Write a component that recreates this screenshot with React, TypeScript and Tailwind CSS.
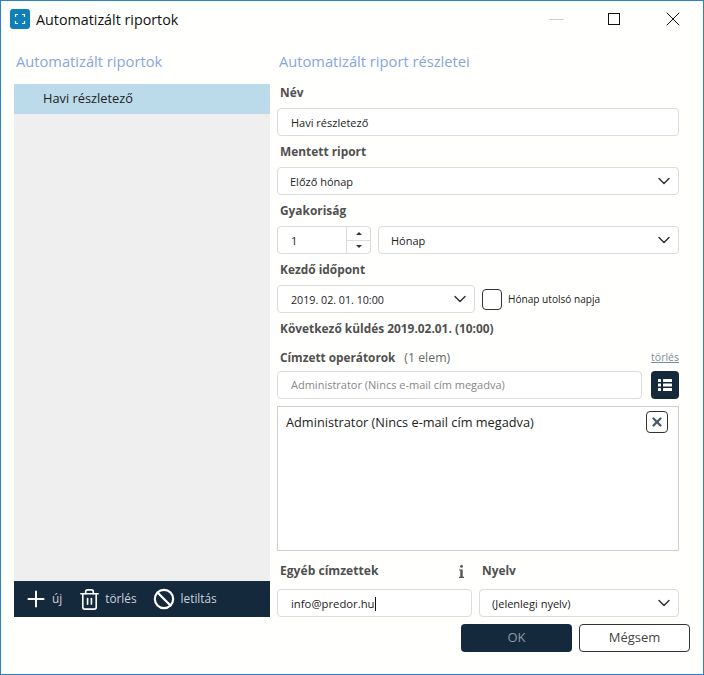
import React from 'react';
import { ChevronDown, Plus, Trash2, Ban, X } from 'lucide-react';

const fieldClass = 'h-[28px] bg-white border border-[#dcdcdc] rounded-[4px] flex items-center text-[11px] text-[#222]';

const Label: React.FC<{ children: React.ReactNode; className?: string }> = ({ children, className }) => (
  <div className={`h-[18px] flex items-center pl-[3px] text-[11.9px] font-bold text-[#505050] ${className ?? ''}`}>{children}</div>
);

const Select: React.FC<{ value: string; className?: string }> = ({ value, className }) => (
  <div className={`${fieldClass} justify-between pl-[12px] pr-[4px] ${className ?? ''}`}>
    <span className="pt-[2px]">{value}</span>
    <ChevronDown className="w-[20px] h-[20px] text-[#333]" strokeWidth={1.8} />
  </div>
);

export default function App() {
  return (
    <div className="w-[704px] h-[675px] bg-[#fffffd] border border-[#2b82c4] flex flex-col overflow-hidden font-['Open_Sans',sans-serif]">
      {/* title bar */}
      <div className="h-[38px] shrink-0 flex items-center pb-[2px] pl-[9px] pr-[18px]">
        <div className="w-[20px] h-[20px] rounded-[3px] bg-[#0f7fb8] flex items-center justify-center">
          <svg viewBox="0 0 14 14" className="w-[14px] h-[14px]" fill="none" stroke="white" strokeWidth="1.2">
            <path d="M2.5 5V2.5H5M9 2.5h2.5V5M11.5 9v2.5H9M5 11.5H2.5V9" />
          </svg>
        </div>
        <span className="ml-[6px] pt-[2px] text-[14.3px] text-[#111]">Automatizált riportok</span>
        <div className="ml-auto flex items-center">
          <div className="w-[15px] h-px bg-[#cfcfcf]" />
          <div className="ml-[44px] w-[12px] h-[12px] border border-[#111]" />
          <X className="ml-[41px] w-[24px] h-[24px] text-[#111]" strokeWidth={1} />
        </div>
      </div>

      <div className="flex-1 flex pl-[13px] min-h-0">
        {/* left column */}
        <div className="w-[256px] shrink-0 flex flex-col">
          <div className="h-[45px] pt-[13px] pl-[2px] text-[14.7px] leading-[19px] text-[#86a6de]">Automatizált riportok</div>
          <div className="h-[497px] bg-[#efefef]">
            <div className="h-[30px] bg-[#bcdbea] flex items-center pl-[29px] text-[12.8px] text-[#222]">Havi részletező</div>
          </div>
          <div className="h-[36px] bg-[#15293d] flex items-center pl-[9px] text-[11.8px] text-[#c8d2db]">
            <Plus className="w-[26px] h-[26px] text-white" strokeWidth={1.8} />
            <span className="ml-[3px]">új</span>
            <Trash2 className="ml-[16px] w-[23px] h-[23px] text-white" strokeWidth={1.7} />
            <span className="ml-[4px]">törlés</span>
            <Ban className="ml-[16px] w-[22px] h-[22px] text-white" strokeWidth={2.4} />
            <span className="ml-[6px]">letiltás</span>
          </div>
        </div>

        {/* right column */}
        <div className="w-[402px] ml-[7px] shrink-0 flex flex-col">
          <div className="h-[45px] pt-[13px] pl-[2px] text-[14.7px] leading-[19px] text-[#86a6de]">Automatizált riport részletei</div>
          <Label>Név</Label>
          <div className={`${fieldClass} pl-[13px] pt-[2px] mt-[6px]`}>Havi részletező</div>
          <Label className="mt-[7px]">Mentett riport</Label>
          <Select value="Előző hónap" className="mt-[6px]" />
          <Label className="mt-[7px]">Gyakoriság</Label>
          <div className="flex gap-[7px] mt-[6px]">
            <div className={`${fieldClass} w-[94px] pl-[13px] justify-between`}>
              <span className="pt-[2px]">1</span>
              <div className="w-[24px] h-full border-l border-[#dcdcdc] flex flex-col">
                <div className="flex-1 flex items-center justify-center border-b border-[#dcdcdc]">
                  <div className="w-0 h-0 border-x-[3px] border-x-transparent border-b-[3px] border-b-[#333]" />
                </div>
                <div className="flex-1 flex items-center justify-center">
                  <div className="w-0 h-0 border-x-[3px] border-x-transparent border-t-[3px] border-t-[#333]" />
                </div>
              </div>
            </div>
            <Select value="Hónap" className="flex-1" />
          </div>
          <Label className="mt-[7px]">Kezdő időpont</Label>
          <div className="flex items-center mt-[6px]">
            <Select value="2019. 02. 01. 10:00" className="w-[198px] !pl-[13px] !text-[10.7px]" />
            <div className="ml-[7px] w-[20px] h-[21px] border border-[#333] rounded-[4px] bg-white" />
            <span className="ml-[6px] pt-[2px] text-[10.1px] text-[#222]">Hónap utolsó napja</span>
          </div>
          <Label className="mt-[7px]">Következő küldés 2019.02.01. (10:00)</Label>
          <div className="h-[18px] mt-[11px] flex items-center justify-between">
            <div className="pl-[3px] text-[11.8px] text-[#505050]">
              <span className="font-bold">Címzett operátorok</span>
              <span className="ml-[9px] text-[12.3px] text-[#666]">(1 elem)</span>
            </div>
            <span className="text-[10.5px] text-[#7d8a96] underline">törlés</span>
          </div>
          <div className="flex gap-[9px] mt-[4px]">
            <div className={`${fieldClass} flex-1 pl-[13px] !text-[#888]`}>Administrator (Nincs e-mail cím megadva)</div>
            <div className="w-[28px] h-[28px] rounded-[4px] bg-[#15293d] flex items-center justify-center">
              <svg viewBox="0 0 14 12" className="w-[14px] h-[12px]" fill="white">
                <rect x="0" y="0" width="3" height="3" rx="0.5" />
                <rect x="5" y="0" width="9" height="3" rx="0.5" />
                <rect x="0" y="4.5" width="3" height="3" rx="0.5" />
                <rect x="5" y="4.5" width="9" height="3" rx="0.5" />
                <rect x="0" y="9" width="3" height="3" rx="0.5" />
                <rect x="5" y="9" width="9" height="3" rx="0.5" />
              </svg>
            </div>
          </div>
          <div className="h-[145px] mt-[7px] bg-white border border-[#cfcfcf] flex items-start justify-between pl-[8px] pr-[10px] pt-[4px]">
            <span className="text-[12.75px] leading-[22px] text-[#222]">Administrator (Nincs e-mail cím megadva)</span>
            <div className="w-[22px] h-[22px] border border-[#333] rounded-[4px] flex items-center justify-center">
              <X className="w-[14px] h-[14px] text-[#4b5a68]" strokeWidth={4} />
            </div>
          </div>
          <div className="flex gap-[7px] mt-[11px]">
            <div className="w-[195px]">
              <div className="h-[18px] flex items-center justify-between pl-[3px] pr-[8px] text-[12.1px] font-bold text-[#505050]">
                <span>Egyéb címzettek</span>
                <svg viewBox="0 0 5 13" className="w-[5px] h-[13px]" fill="#555">
                  <circle cx="2.5" cy="1.4" r="1.4" />
                  <path d="M0 4.4h3.7v7.4H5V13H0v-1.2h1.3V5.6H0z" />
                </svg>
              </div>
              <div className={`${fieldClass} !text-[11.3px] pl-[13px] pt-[2px] mt-[9px]`}>
                info@predor.hu<span className="w-px h-[14px] bg-[#111]" />
              </div>
            </div>
            <div className="flex-1">
              <Label>Nyelv</Label>
              <Select value="(Jelenlegi nyelv)" className="mt-[9px]" />
            </div>
          </div>
        </div>
      </div>

      {/* footer buttons */}
      <div className="h-[50px] shrink-0 flex justify-end gap-[7px] pr-[13px]">
        <div className="w-[111px] h-[28px] rounded-[4px] bg-[#15293d] flex items-center justify-center text-[13px] text-[#8c99a6]">OK</div>
        <div className="w-[111px] h-[28px] rounded-[4px] bg-white border border-[#333] flex items-center justify-center text-[13px] text-[#444]">Mégsem</div>
      </div>
    </div>
  );
}
